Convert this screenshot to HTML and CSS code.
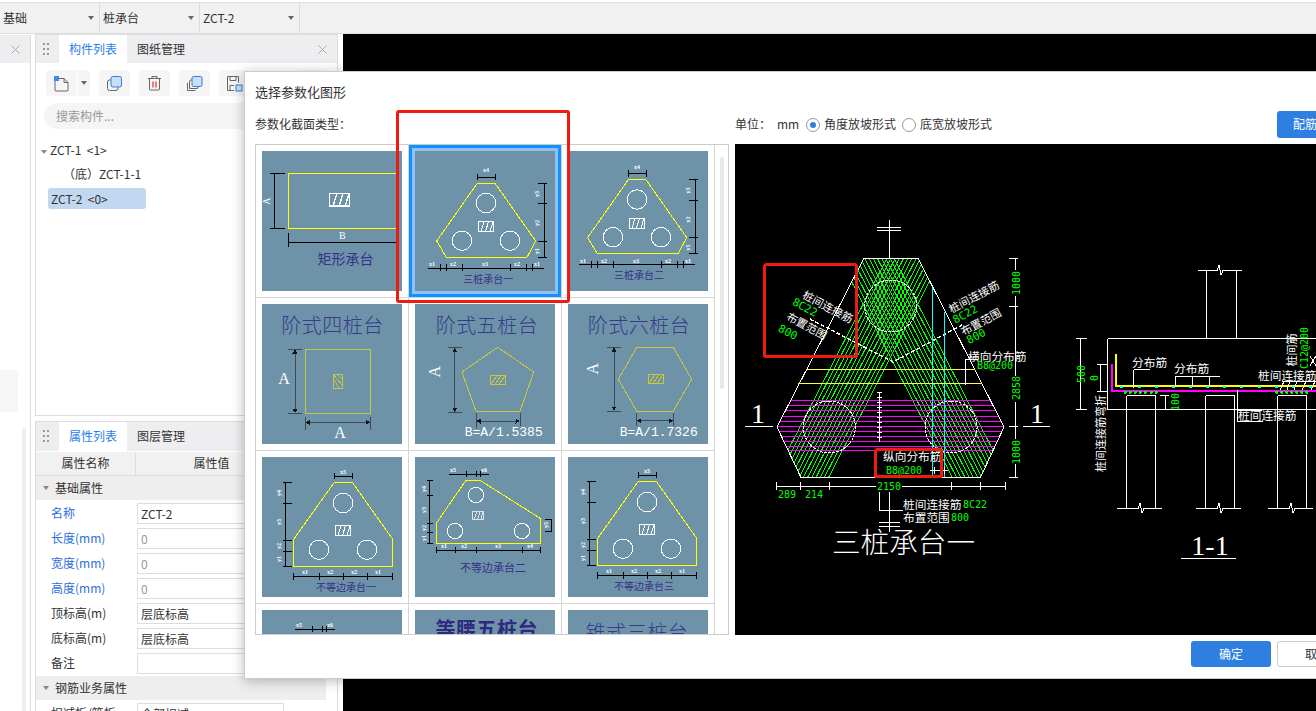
FILE: index.html
```html
<!DOCTYPE html>
<html lang="zh-CN">
<head>
<meta charset="utf-8">
<title>选择参数化图形</title>
<link rel="stylesheet" href="styles.css">
</head>
<body>
<header class="topbar">
  <div class="sel"><span>基础</span><i class="caret"></i></div>
  <div class="sel"><span>桩承台</span><i class="caret"></i></div>
  <div class="sel"><span>ZCT-2</span><i class="caret"></i></div>
</header>
<main class="main">
  <aside class="stub">
    <div class="stub-head"><svg class="close" width="9" height="9" viewBox="0 0 9 9"><path d="M.5.5l8 8M8.500.5l-8 8"/></svg></div>
    <div class="stub-body"><div class="stub-block"></div><div class="stub-scroll"></div></div>
  </aside>
  <div class="panels">
    <section class="panel panel-top">
      <div class="phead">
        <svg class="dots" width="6" height="13" viewBox="0 0 6 13"><path d="M0 0h2v2H0zM4 0h2v2H4zM0 5h2v2H0zM4 5h2v2H4zM0 10h2v2H0zM4 10h2v2H4z"/></svg>
        <span class="tab active">构件列表</span><span class="tab">图纸管理</span>
        <svg class="close push" width="9" height="9" viewBox="0 0 9 9"><path d="M.5.5l8 8M8.500.5l-8 8"/></svg>
      </div>
      <div class="tools">
        <button class="tool first"><svg width="17" height="17" viewBox="0 0 17 17"><path class="ic" d="M2 3.500h9l4 4v7.500a1 1 0 0 1-1 1H3a1 1 0 0 1-1-1z"/><path class="ic" d="M11 3.500v4h4"/><rect class="bl" x="1" y="1" width="5" height="5"/></svg></button>
        <button class="tool split"><i class="caret"></i></button>
        <button class="tool"><svg width="17" height="17" viewBox="0 0 17 17"><rect class="ic" x="1.500" y="5" width="10.500" height="10.500" rx="2"/><rect class="fillb" x="5" y="1.500" width="10.500" height="10.500" rx="2"/></svg></button>
        <button class="tool"><svg width="15" height="16" viewBox="0 0 15 16"><path class="ic" d="M1 3.500h13M5 3.500V1.500h5v2M2.500 3.500v10.500a1 1 0 0 0 1 1h8a1 1 0 0 0 1-1V3.500"/><path class="rd" d="M6 6.500v6M9 6.500v6"/></svg></button>
        <button class="tool"><svg width="17" height="17" viewBox="0 0 17 17"><path class="ic" d="M3.500 6v7.500h8M1.500 8v7.500h8"/><rect class="ic" x="3.500" y="5" width="8.500" height="8.500" rx="1.500"/><rect class="fillb" x="6" y="1.500" width="10" height="10" rx="1.500"/></svg></button>
        <button class="tool"><svg width="17" height="17" viewBox="0 0 17 17"><path class="ic" d="M1.500 1.500h11v6M8 15.500H1.500v-14M4 1.500v4h6v-4M4 15.500v-5h4"/><rect class="fillb" x="10" y="10" width="6" height="6"/></svg></button>
        <button class="tool last"></button>
      </div>
      <div class="search">搜索构件...</div>
      <ul class="tree">
        <li class="tree-root"><i class="caret"></i>ZCT-1&nbsp; &lt;1&gt;</li>
        <li class="tree-child">（底）ZCT-1-1</li>
        <li class="tree-sel">ZCT-2&nbsp; &lt;0&gt;</li>
      </ul>
    </section>
    <section class="panel panel-bottom">
      <div class="phead">
        <svg class="dots" width="6" height="13" viewBox="0 0 6 13"><path d="M0 0h2v2H0zM4 0h2v2H4zM0 5h2v2H0zM4 5h2v2H4zM0 10h2v2H0zM4 10h2v2H4z"/></svg>
        <span class="tab active">属性列表</span><span class="tab">图层管理</span>
      </div>
      <div class="thead"><span>属性名称</span><span>属性值</span></div>
      <div class="group"><i class="caret"></i>基础属性</div>
      <div class="rows">
        <div class="row"><label class="blue">名称</label><div class="inp">ZCT-2</div></div>
        <div class="row"><label class="blue">长度(mm)</label><div class="inp mute">0</div></div>
        <div class="row"><label class="blue">宽度(mm)</label><div class="inp mute">0</div></div>
        <div class="row"><label class="blue">高度(mm)</label><div class="inp mute">0</div></div>
        <div class="row"><label>顶标高(m)</label><div class="inp">层底标高</div></div>
        <div class="row"><label>底标高(m)</label><div class="inp">层底标高</div></div>
        <div class="row"><label>备注</label><div class="inp"></div></div>
      </div>
      <div class="group g2"><i class="caret"></i>钢筋业务属性</div>
      <div class="rows">
        <div class="row"><label>扣减板/筏板</label><div class="inp">全部扣减</div></div>
      </div>
    </section>
  </div>
  <div class="canvas"></div>
</main>

<div class="dialog">
  <h1 class="dtitle">选择参数化图形</h1>
  <div class="dbar">
    <div class="dbar-left">参数化截面类型：</div>
    <div class="dbar-right">
      <span class="unit">单位：</span><span class="mm">mm</span>
      <span class="radio on"></span><span class="rlabel">角度放坡形式</span>
      <span class="radio"></span><span class="rlabel">底宽放坡形式</span>
      <button class="btn primary push small">配筋</button>
    </div>
  </div>
  <div class="dbody">
    <div class="gridbox">
      <div class="grid">
        <div class="cell"><svg class="thumb" width="140" height="140" viewBox="0 0 140 140">
          <defs>
            <g id="hatch"><rect class="wl" x=".5" y=".5" width="15" height="10"/><path class="wl" d="M3 10.500 6 .5M7.500 10.500l3-10M12 10.500l3-10"/></g>
            <g id="ohatch"><rect class="ol" x=".5" y=".5" width="15" height="9"/><path class="ol" d="M1 9.500 7 .5M5 9.500 11 .5M9 9.500 15 .5"/></g>
            <g id="tri">
              <path class="yl" d="M62.300 32.300H80L120.700 90 112 106.300H31.300L21.700 90Z"/>
              <circle class="wl" cx="71" cy="52" r="9.700"/><circle class="wl" cx="47" cy="89.700" r="9.700"/><circle class="wl" cx="95" cy="89.700" r="9.700"/>
              <use href="#hatch" x="63" y="70"/>
              <path class="bk" d="M62.300 26H80.300M62.300 22.700V29.300M80.300 22.700V29.300M129.300 32V106.300M123 32.300H132M123 52.700H132M123 90H132M123 106.300H132M13 117.300H128.700M25.300 113V120M31.300 113V120M47.300 113V120M95.300 113V120M111.300 113V120M117.300 113V120"/>
              <text class="lb" x="71" y="21">x4</text><text class="lb" x="17" y="115">x1</text><text class="lb" x="38" y="115">x2</text><text class="lb" x="70" y="115">x3</text><text class="lb" x="102" y="115">x2</text><text class="lb" x="122" y="115">x1</text>
              <text class="lb" transform="rotate(-90 124 43)" x="124" y="43">y3</text><text class="lb" transform="rotate(-90 124 72)" x="124" y="72">y2</text><text class="lb" transform="rotate(-90 124 100)" x="124" y="100">y1</text>
            </g>
            <g id="uneq">
              <path class="yl" d="M72.300 25.300H90.300L130.700 82.300V109.300H31.700V82.300Z"/>
              <circle class="wl" cx="81" cy="46" r="9.700"/><circle class="wl" cx="57" cy="92.700" r="9.700"/><circle class="wl" cx="105" cy="92.700" r="9.700"/>
              <use href="#hatch" x="73" y="68"/>
              <path class="bk" d="M72.300 19H90.300M72.300 15.700V22.300M90.300 15.700V22.300M23.700 25.300V109.300M21.300 25.300H29.700M21.300 46.300H29.700M21.300 83.300H29.700M21.300 94H29.700M21.300 109.300H29.700M31.700 119.700H130.300M31.700 115.500V123M57.300 115.500V123M81.300 115.500V123M105.300 115.500V123M130.300 115.500V123"/>
              <text class="lb" x="81" y="17">x5</text><text class="lb" x="43" y="117">x1</text><text class="lb" x="68" y="117">x2</text><text class="lb" x="92" y="117">x2</text><text class="lb" x="116" y="117">x1</text>
              <text class="lb" transform="rotate(-90 19 36)" x="19" y="36">y4</text><text class="lb" transform="rotate(-90 19 65)" x="19" y="65">y3</text><text class="lb" transform="rotate(-90 19 89)" x="19" y="89">y2</text><text class="lb" transform="rotate(-90 19 102)" x="19" y="102">y1</text>
            </g>
          </defs>
          <rect class="yl" x="26.300" y="22.300" width="110" height="55"/>
          <use href="#hatch" transform="translate(67 42) scale(1.340 1.240)"/>
          <path class="bk" d="M12.700 22.300V77.300M8 22.300H23M8 77.300H23M26.300 91.300H136.300M26.300 82V96M136.300 82V96"/>
          <text class="cap-a" transform="rotate(-90 8 50)" x="8" y="50">A</text>
          <text class="cap-a" x="80.300" y="88">B</text>
          <text class="cap" x="83.500" y="113" font-size="14">矩形承台</text>
        </svg></div>

        <div class="cell"><svg class="thumb selected" width="140" height="140" viewBox="0 0 140 140">
          <use href="#tri"/><text class="cap" x="73.300" y="132" font-size="10">三桩承台一</text>
        </svg></div>

        <div class="cell"><svg class="thumb" width="140" height="140" viewBox="0 0 140 140">
          <use href="#tri" x="-2" y="-3.500"/><text class="cap" x="71" y="128" font-size="10">三桩承台二</text>
        </svg></div>

        <div class="cell"><svg class="thumb" width="140" height="140" viewBox="0 0 140 140">
          <text class="title" x="70.500" y="28.500">阶式四桩台</text>
          <rect class="ol" x="43.300" y="45" width="65" height="64.300"/>
          <g transform="translate(71 70)"><rect class="ol" width="9.700" height="14.700"/><path class="ol" d="M0 4 6 14M0 0 9.700 12M4 0 9.700 6"/></g>
          <path class="dm" d="M33 48V106M26 45H40M26 109.300H40M46 118.300H105M43.300 113V126M108 113V126"/>
          <path class="ar" d="M33 45l-2.500 4.500h5zM33 109.300l-2.500-4.500h5zM43.300 118.300l4.500-2.500v5zM108 118.300l-4.500-2.500v5z"/>
          <text class="cap-big" x="22" y="80">A</text><text class="cap-big" x="78" y="134">A</text>
        </svg></div>

        <div class="cell"><svg class="thumb" width="140" height="140" viewBox="0 0 140 140">
          <text class="title" x="72" y="28.500">阶式五桩台</text>
          <path class="ol" d="M82.700 43.300 118.700 68 105 107.300H61L47 68Z"/>
          <use href="#ohatch" x="75" y="71"/>
          <path class="dm" d="M39.700 46V106M33 43.700H47M33 108.300H47M63 117H103M61 109V124M105 109V122"/>
          <path class="ar" d="M39.700 43.700l-2.500 4.500h5zM39.700 108.300l-2.500-4.500h5zM61 117l4.500-2.500v5zM105 117l-4.500-2.500v5z"/>
          <text class="cap-big" transform="rotate(-90 25 72.700)" x="30" y="72.700">A</text>
          <text class="formula" x="88.700" y="132">B=A/1.5385</text>
        </svg></div>

        <div class="cell"><svg class="thumb" width="140" height="140" viewBox="0 0 140 140">
          <text class="title" x="71" y="28.500">阶式六桩台</text>
          <path class="ol" d="M68.700 43.300H105.300L123.700 75.300 105.300 107H68.700L50.300 75.300Z"/>
          <use href="#ohatch" x="80" y="70"/>
          <path class="dm" d="M46 46V104M39 43.300H53M39 107H53M71 116.700H103M68.700 109V122M105.300 109V122"/>
          <path class="ar" d="M46 43.300l-2.500 4.500h5zM46 107l-2.500-4.500h5zM68.700 116.700l4.500-2.500v5zM105.300 116.700l-4.500-2.500v5z"/>
          <text class="cap-big" transform="rotate(-90 30.300 69.300)" x="35" y="69.300">A</text>
          <text class="formula" x="90.700" y="132">B=A/1.7326</text>
        </svg></div>

        <div class="cell"><svg class="thumb" width="140" height="140" viewBox="0 0 140 140">
          <use href="#uneq"/><text class="cap" x="84" y="133.500" font-size="10">不等边承台一</text>
        </svg></div>

        <div class="cell"><svg class="thumb" width="140" height="140" viewBox="0 0 140 140">
          <g id="uneq2">
            <path class="yl" d="M51 23.300H65L125.700 61.700V86.300H21.700V65.700Z"/>
            <circle class="wl" cx="61" cy="38" r="7.700"/><circle class="wl" cx="40" cy="74" r="7.700"/><circle class="wl" cx="107" cy="74" r="7.700"/>
            <use href="#hatch" transform="translate(57.300 54.300) scale(.72 .75)"/>
            <path class="bk" d="M34 17.300H73.700M51.300 14V20M61 14V20M65 14V20M14.700 23.300V86.300M11.500 23.300H17.500M11.500 38.300H17.500M11.500 66H17.500M11.500 75H17.500M11.500 86.300H17.500M136 62.300V74.300M130 62.300H137M130 74.300H137M21.700 93.300H125.300M21.700 90V96M40.300 90V96M61 90V96M107 90V96M125.300 90V96"/>
            <text class="lb" x="38" y="15">x5</text><text class="lb" x="69" y="15">x6</text><text class="lb" x="29" y="91">x1</text><text class="lb" x="49" y="91">x2</text><text class="lb" x="83" y="91">x3</text><text class="lb" x="115" y="91">x4</text>
            <text class="lb" transform="rotate(-90 11 32)" x="11" y="32">y4</text><text class="lb" transform="rotate(-90 11 53)" x="11" y="53">y3</text><text class="lb" transform="rotate(-90 11 71)" x="11" y="71">y2</text><text class="lb" transform="rotate(-90 11 81)" x="11" y="81">y1</text><text class="lb" transform="rotate(-90 133 68)" x="133" y="68">y5</text>
          </g>
          <text class="cap" x="78" y="114.500" font-size="11">不等边承台二</text>
        </svg></div>

        <div class="cell"><svg class="thumb" width="140" height="140" viewBox="0 0 140 140">
          <use href="#uneq" x="-2" y="-1"/><text class="cap" x="76" y="132.500" font-size="10">不等边承台三</text>
        </svg></div>

        <div class="cell"><svg class="thumb" width="140" height="140" viewBox="0 0 140 140">
          <use href="#uneq2" x="-1" y="2"/>
        </svg></div>
        <div class="cell"><svg class="thumb" width="140" height="140" viewBox="0 0 140 140">
          <text class="title strong" x="71.700" y="27">等腰五桩台</text>
        </svg></div>
        <div class="cell"><svg class="thumb" width="140" height="140" viewBox="0 0 140 140">
          <text class="title" x="69" y="30">锥式三桩台</text>
        </svg></div>
      </div>
      <div class="vscroll"><div class="vthumb"></div></div>
    </div>

    <div class="preview">
      <svg class="cad" width="581" height="491" viewBox="735 144 581 491">
        <defs>
          <clipPath id="hexclip"><path d="M864 258H918L1004 427 980.700 477H800.700L777 427Z"/></clipPath>
          <g id="strip" class="cg">
            <path d="M887 258l-112.800 219M891.200 258l-112.800 219M895.400 258l-112.800 219M899.600 258l-112.800 219M903.800 258l-112.800 219M908 258l-112.800 219M912.200 258l-112.800 219M916.400 258l-112.800 219M920.600 258l-112.800 219M924.800 258l-112.800 219M929 258l-112.800 219M933.200 258l-112.800 219M937.400 258l-112.800 219M941.600 258l-112.800 219"/>
          </g>
        </defs>
        <g clip-path="url(#hexclip)">
          <use href="#strip"/>
          <use href="#strip" transform="translate(1781 0) scale(-1 1)"/>
          <path class="cm" d="M770 400.500H1010M770 405.500H1010M770 410.500H1010M770 416H1010M770 421.500H1010M770 426.500H1010M770 431.500H1010M770 436.500H1010M770 441.500H1010M770 446.500H1010M770 450.500H1010"/>
          <path class="cw dash" d="M829.300 401a26 26 0 1 0 .1 0M951 401a26 26 0 1 0 .1 0"/>
        </g>
        <circle class="cw dash" cx="890.700" cy="306" r="26"/>
        <path class="cw" d="M864 258H918L1004 427 980.700 477H800.700L777 427Z"/>
        <path class="cw dash2" d="M810 319 893 362 962 325"/>
        <path class="cc" d="M932.500 287V477M944.500 312V477"/>
        <path class="cy" d="M806 369.500H975M798 383.500H982"/>
        <path class="cw" d="M889.500 220V258M877 227.500H901M877 230.500H901M745 426.500H773M1023 426.500H1050"/>
        <path class="cw" d="M1015.500 258V270M1015.500 296V376M1015.500 402V439M1015.500 464V477M1009 258.500H1018M1009 306.500H1018M1009 426.500H1018M1009 477.500H1018"/>
        <path class="cw" d="M965 359H978M965 359V385M961 369.500H968M961 383.500H968"/>
        <path class="cw" d="M879.500 392V442"/><path class="cw dash3" d="M879.500 392V442"/>
        <path class="cw" d="M776.700 486.500H876M902 486.500H1005M776.700 482V490M800.700 482V490M829.700 482V490M951.700 482V490M980.700 482V490M1005 482V490M879.500 492V510.500H903M889.500 492V532M879 522.500H900M879 526H900"/>
        <path class="cw" d="M930 470.500H948M934 467V474M944 467V474"/>

        <text class="cgt" x="787" y="498">289</text><text class="cgt" x="814" y="498">214</text><text class="cgt" x="889" y="490">2150</text>
        <text class="cgt" transform="rotate(-90 1020 283)" x="1020" y="283">1000</text>
        <text class="cgt" transform="rotate(-90 1020 388)" x="1020" y="388">2858</text>
        <text class="cgt" transform="rotate(-90 1020 452)" x="1020" y="452">1000</text>

        <text class="t" x="968" y="361">横向分布筋</text><text class="cgs" x="977" y="369">B8@200</text>
        <text class="tm" transform="rotate(28 827.700 307)" x="827.700" y="311">桩间连接筋</text>
        <text class="cgm" transform="rotate(28 805 307)" x="805" y="311">8C22</text>
        <text class="tm" transform="rotate(28 806.700 326)" x="806.700" y="330">布置范围</text>
        <text class="cgm" transform="rotate(28 788 332)" x="788" y="336">800</text>
        <text class="tm" transform="rotate(-28 974 297)" x="974" y="301">桩间连接筋</text>
        <text class="cgm" transform="rotate(-28 965 314)" x="965" y="318">8C22</text>
        <text class="tm" transform="rotate(-28 981 322)" x="981" y="326">布置范围</text>
        <text class="cgm" transform="rotate(-28 976 336)" x="976" y="340">800</text>
        <text class="t" x="883" y="461" font-size="11">纵向分布筋</text><text class="cgs" x="886" y="474">B8@200</text>
        <text class="t" x="903" y="509">桩间连接筋</text><text class="cgs" x="963" y="508">8C22</text>
        <text class="t" x="903" y="522">布置范围</text><text class="cgs" x="951" y="521">800</text>
        <text class="bigt" x="832" y="553">三桩承台一</text>
        <text class="one" x="758" y="423">1</text><text class="one" x="1037" y="423">1</text>

        <path class="cw" d="M1107.500 338.500H1316M1107.500 338.500V409.500H1316M1206.500 270V338.500M1236.500 270V338.500M1198 270.500H1217L1219 265 1221 275 1223 270.500H1242"/>
        <path class="cw" d="M1080.500 338.500V409.500M1076 338.500H1087M1076 409.500H1087M1100.500 364V391M1097 364H1107M1097 391H1107"/>
        <path class="cp" d="M1112 364V391H1316"/><path class="cy2" d="M1116 354V386H1316"/>
        <path class="dotc" d="M1121.300 387h.01M1139.300 387h.01M1156.300 387h.01M1173.300 387h.01M1190.300 387h.01M1207.300 387h.01M1224.300 387h.01M1241.300 387h.01M1259.300 387h.01M1276.300 387h.01M1293.300 387h.01M1310.300 387h.01"/>
        <path class="dotg" d="M1125.300 392.300h.01M1130.300 392.300h.01M1135.300 392.300h.01M1140.300 392.300h.01M1145.300 392.300h.01M1151.300 392.300h.01M1156.300 392.300h.01M1276.700 392.300h.01M1281.700 392.300h.01M1286.700 392.300h.01M1291.700 392.300h.01M1296.700 392.300h.01M1301.700 392.300h.01M1306.700 392.300h.01"/>
        <path class="cw" d="M1126.500 395.500V508.500M1155.500 395.500V508.500M1126.500 395.500H1155.500M1205.500 395.500V508.500M1234.500 395.500V508.500M1205.500 395.500H1234.500M1277.500 395.500V508.500M1306.500 395.500V508.500M1277.500 395.500H1306.500"/>
        <path class="cw" d="M1117 508.500H1138L1140 503 1142 513 1144 508.500H1161.500M1196 508.500H1217L1219 503 1221 513 1223 508.500H1240.500M1268 508.500H1289L1291 503 1293 513 1295 508.500H1312.500"/>
        <path class="cw" d="M1133.500 369.500H1150M1133.500 369.500V388M1176 376.500H1220M1176 376.500 1175 387M1193 376.500 1192 387M1210 376.500 1209 387M1282 381.500H1316M1284 381.500 1280 390M1290 381.500 1287 390M1297 381.500 1294 390M1306 381.500 1302 390M1315 381.500 1311 390"/>
        <path class="cw" d="M1237.500 390V421.500H1262.500M1237.500 410.500H1262M1165.500 395.500V409.500M1160 395.500H1169M1160 409.500H1169M1310 356 1316 366M1310 366 1316 356"/>
        <text class="cgt" transform="rotate(-90 1081 374)" x="1081" y="378">500</text>
        <text class="cgt" transform="rotate(-90 1094 378)" x="1094" y="382">0</text>
        <text class="cgt" transform="rotate(-90 1175 402)" x="1175" y="406">100</text>
        <text class="cgt" transform="rotate(-90 1304 348)" x="1304" y="352">C12@200</text>
        <text class="tm" transform="rotate(-90 1100 433.500)" x="1100" y="438" font-size="12">桩间连接筋弯折</text>
        <text class="tm" transform="rotate(-90 1292 350)" x="1292" y="354" font-size="12">桩间筋</text>
        <text class="t" x="1132" y="367">分布筋</text><text class="t" x="1174" y="373">分布筋</text>
        <text class="t" x="1258" y="380">桩间连接筋</text><text class="t" x="1238" y="420">桩间连接筋</text>
        <text class="one" x="1210" y="555">1-1</text>
        <path class="cw" d="M1181 558.500H1236"/>

        <rect class="redbox" x="764.500" y="264.500" width="92" height="92" rx="2"/>
        <rect class="redbox" x="875.500" y="449.500" width="66" height="27" rx="2"/>
      </svg>
    </div>
  </div>
  <div class="dfoot">
    <button class="btn primary">确定</button>
    <button class="btn plain">取消</button>
  </div>
  <div class="redmark"></div>
</div>
</body>
</html>
```

FILE: styles.css
```css
* { box-sizing: border-box; }
html, body { margin: 0; padding: 0; }
body {
  width: 1316px;
  height: 711px;
  overflow: hidden;
  position: relative;
  background: #fff;
  color: #333;
  font: 12px/1.2 "Noto Sans CJK SC", "Liberation Sans", sans-serif;
}
.caret {
  display: inline-block;
  width: 0;
  height: 0;
  border-left: 3.5px solid transparent;
  border-right: 3.5px solid transparent;
  border-top: 4px solid #666;
}
.close { fill: none; stroke: #aaa; stroke-width: 1; flex: none; }
.push { margin-left: auto; }

/* top bar */
.topbar {
  margin-top: 2px;
  height: 32px;
  display: flex;
  background: #f1f1f1;
  border-top: 1px solid #ddd;
  border-bottom: 1px solid #ddd;
}
.sel {
  width: 100px;
  padding: 0 5px 0 3px;
  display: flex;
  align-items: center;
  justify-content: space-between;
  border-right: 1px solid #ddd;
}

/* main row */
.main { display: flex; height: 677px; }
.stub { width: 31px; margin-top: 1px; border-right: 1px solid #ddd; display: flex; flex-direction: column; }
.stub-head { flex: none; height: 28px; background: #eeeef0; display: flex; align-items: center; justify-content: flex-end; padding-right: 10px; }
.stub-body { flex: 1; min-height: 0; display: flex; flex-direction: column; }
.stub-block { flex: none; width: 18px; height: 42px; margin-top: 307px; background: #f6f6f6; }
.stub-scroll { flex: 1; width: 4px; margin: 16px 0 0 22px; background: #eee; border-radius: 2px; }
.panels { width: 303px; margin: 0 0 0 4px; display: flex; flex-direction: column; gap: 5px; }
.panel { border: 1px solid #ddd; }
.panel-top { flex: none; height: 382px; }
.panel-bottom { flex: 1; min-height: 0; border-bottom: 0; overflow: hidden; }
.canvas { flex: 1; margin-left: 5px; background: #000; }
.phead { height: 28px; background: #eeeef0; display: flex; align-items: stretch; padding-right: 10px; }
.phead .close { align-self: center; }
.dots { fill: #999; margin: 8px 10px 0 7px; }
.tab { width: 68px; display: flex; align-items: center; justify-content: center; }
.tab.active { background: #fff; color: #2b7de9; }

.tools { display: flex; padding: 7px 0 0 10px; }
.tool {
  width: 32px;
  height: 26px;
  padding: 0;
  border: 0;
  border-radius: 4px;
  background: #f5f5f5;
  margin-right: 9px;
  display: flex;
  align-items: center;
  justify-content: center;
}
.tool.first { margin-right: 1px; border-radius: 4px 0 0 4px; }
.tool.split { width: 12px; border-radius: 0 4px 4px 0; }
.tool.last { margin-left: 38px; }
.ic { fill: none; stroke: #666; stroke-width: 1; }
.bl { fill: #3d8be8; }
.rd { fill: none; stroke: #d9312a; stroke-width: 1.2; }
.fillb { fill: #c9def7; stroke: #2e7fe0; stroke-width: 1; }
.search {
  margin: 7px 0 0 8px;
  width: 280px;
  height: 26px;
  padding: 0 12px;
  line-height: 26px;
  border-radius: 13px;
  background: #f5f5f5;
  color: #999;
}
.tree { list-style: none; margin: 9px 0 0; padding: 0; }
.tree li { height: 24px; line-height: 24px; white-space: nowrap; }
.tree-root { padding-left: 5px; }
.tree-root .caret { margin-right: 3px; vertical-align: middle; border-top-color: #888; }
.tree-child { padding-left: 27px; }
.tree .tree-sel { width: 98px; height: 21px; line-height: 21px; margin: 2px 0 0 12px; padding-left: 3px; background: #c1d8f0; border-radius: 3px; }

.panel-bottom .phead { border-bottom: 1px solid #fff; height: 30px; }
.thead { height: 24px; display: grid; grid-template-columns: 100px 1fr; background: #f1f1f1; border-bottom: 1px solid #ddd; }
.thead span { display: flex; align-items: center; justify-content: center; }
.thead span:first-child { border-right: 1px solid #ddd; }
.thead span:last-child { padding-right: 50px; }
.group { height: 24px; width: 290px; display: flex; align-items: center; background: #eee; padding-left: 7px; }
.group .caret { margin-right: 6px; border-top-color: #888; }
.g2 { margin-top: 2px; }
.rows { display: flex; flex-direction: column; gap: 4px; padding-top: 3px; }
.row { display: flex; align-items: center; height: 21px; }
.row label { width: 101px; padding-left: 15px; white-space: nowrap; }
.blue { color: #2b6fe0; }
.inp { width: 147px; height: 21px; line-height: 19px; border: 1px solid #ddd; padding-left: 3px; background: #fff; }
.mute { color: #999; }

/* dialog */
.dialog {
  position: absolute;
  left: 244px;
  top: 71px;
  width: 1130px;
  height: 608px;
  background: #fff;
  border: 1px solid #ccc;
  box-shadow: 0 2px 12px rgba(0, 0, 0, .28);
  display: flex;
  flex-direction: column;
}
.dtitle { margin: 11px 0 0 10px; height: 17px; font-size: 13px; line-height: 17px; font-weight: 400; }
.dbar { margin-top: 11px; height: 27px; display: flex; align-items: center; padding-right: 40px; }
.dbar-left { width: 490px; padding-left: 10px; }
.dbar-right { flex: 1; display: flex; align-items: center; }
.unit { width: 42px; }
.mm { width: 29px; }
.radio { width: 14px; height: 14px; border-radius: 50%; border: 1px solid #999; background: #fff; margin-right: 4px; position: relative; }
.radio.on::after { content: ""; position: absolute; left: 3px; top: 3px; width: 6px; height: 6px; border-radius: 50%; background: #2e7fe0; }
.rlabel { margin-right: 6px; }
.btn { width: 80px; height: 26px; border-radius: 3px; font: inherit; padding: 0; }
.btn.small { width: 56px; height: 27px; }
.primary { background: #2e7fe0; color: #fff; border: 0; }
.plain { background: #fff; color: #333; border: 1px solid #ccc; }
.dbody { margin-top: 6px; height: 491px; display: flex; gap: 6px; margin-left: 10px; }
.gridbox { width: 474px; height: 491px; border: 1px solid #ccc; display: flex; overflow: hidden; flex: none; }
.grid { width: 459px; display: grid; grid-template-columns: repeat(3, 153px); grid-auto-rows: 153px; border-right: 1px solid #d5d5d5; height: 620px; }
.cell { padding: 6px; border-right: 1px solid #d5d5d5; border-bottom: 1px solid #d5d5d5; }
.cell:nth-child(3n) { border-right: 0; }
.thumb { display: block; background: #6e93a9; shape-rendering: crispEdges; }
.thumb.selected { box-shadow: 0 0 0 3px #90c0f5, 0 0 0 6px #0f94ff; }
.vscroll { flex: 1; padding: 12px 0 0 5px; }
.vthumb { width: 4px; height: 232px; background: #e8e8e8; border-radius: 2px; }
.preview { flex: 1; background: #000; overflow: hidden; }
.cad { display: block; shape-rendering: crispEdges; }
.dfoot { display: flex; gap: 6px; padding: 6px 16px 0 0; justify-content: flex-end; }
.redmark { position: absolute; left: 151px; top: 38px; width: 174px; height: 193px; border: 3px solid #ee1c10; border-radius: 3px; }

/* thumbnail drawing */
.thumb path, .thumb rect, .thumb circle { fill: none; }
.yl { stroke: #ffff00; stroke-width: 1; }
.wl { stroke: #fff; stroke-width: 1; }
.bk { stroke: #000; stroke-width: 1; }
.ol { stroke: #c8c83c; stroke-width: 1; }
.dm { stroke: #3f4a55; stroke-width: 1; }
.thumb .ar { fill: #111; }
.lb { fill: #fff; font: bold 6px "Liberation Serif", serif; text-anchor: middle; }
.cap { fill: #36308a; text-anchor: middle; font-family: "Noto Sans CJK SC", sans-serif; }
.cap-a { fill: #fff; text-anchor: middle; font: 10px "Liberation Serif", serif; }
.cap-big { fill: #fff; text-anchor: middle; font: 16px "Liberation Serif", serif; }
.formula { fill: #fff; text-anchor: middle; font: 13px "Liberation Mono", monospace; }
.title { fill: #383a8a; text-anchor: middle; font: 300 20px "Noto Sans CJK SC", sans-serif; letter-spacing: .5px; }
.title.strong { font-weight: 700; font-size: 20px; fill: #2e2a80; }

/* CAD drawing */
.cad path, .cad rect, .cad circle { fill: none; }
.cg path { stroke: #00ff00; stroke-width: 1; }
.cm { stroke: #ff00ff; stroke-width: 1; }
.cw { stroke: #fff; stroke-width: 1; }
.dash { stroke-dasharray: 3 1; }
.dash2 { stroke-width: 1.400; stroke-dasharray: 4 2; }
.dash3 { stroke-width: 5; stroke-dasharray: 1 4; }
.cc { stroke: #00ffff; stroke-width: 1; }
.cy { stroke: #ffff40; stroke-width: 1; }
.cp { stroke: #ff00ff; stroke-width: 2; }
.cy2 { stroke: #ffff00; stroke-width: 2; }
.dotc { stroke: #00ffff; stroke-width: 3; stroke-linecap: round; }
.dotg { stroke: #00ff00; stroke-width: 3; stroke-linecap: round; }
.t { fill: #fff; font-size: 11.700px; font-family: "Noto Sans CJK SC", sans-serif; }
.tm { fill: #fff; font-size: 11px; text-anchor: middle; font-family: "Noto Sans CJK SC", sans-serif; }
.cgt { fill: #00ff00; font: 10px "DejaVu Sans Mono", monospace; text-anchor: middle; }
.cgs { fill: #00ff00; font: 10px "DejaVu Sans Mono", monospace; }
.cgm { fill: #00ff00; font: 11px "DejaVu Sans Mono", monospace; text-anchor: middle; }
.bigt { fill: #fff; font: 300 28.600px "Noto Sans CJK SC", sans-serif; }
.one { fill: #fff; font: 28px "Liberation Serif", serif; text-anchor: middle; }
.redbox { stroke: #ee1c10; stroke-width: 3; }
```
